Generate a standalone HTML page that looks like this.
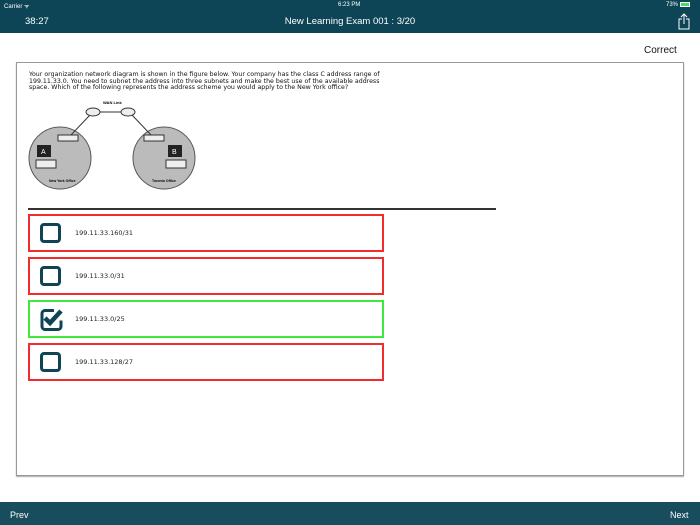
<!DOCTYPE html>
<html><head><style>
*{margin:0;padding:0;box-sizing:border-box}
body{width:700px;height:525px;position:relative;background:#fff;font-family:"Liberation Sans",sans-serif;overflow:hidden}
.top{position:absolute;left:0;top:0;width:700px;height:33px;background:#0d4556;color:#fff}
.bot{position:absolute;left:0;top:502px;width:700px;height:23px;background:#174d5c;color:#fff;font-size:9px}
.abs{position:absolute}
.opt{position:absolute;left:28px;width:356px;height:38px;border:2px solid #f22c2c}
.opt .t{position:absolute;left:45px;top:13px;font-size:6.5px;color:#222;font-family:"DejaVu Sans",sans-serif}
.cb{position:absolute;left:10px;top:7px;width:21px;height:20px;border:3px solid #0e4456;border-radius:4px}
</style></head><body>
<div class="top">
 <div class="abs" style="left:4px;top:2px;font-size:6px">Carrier ᯤ</div>
 <div class="abs" style="left:338px;top:2px;font-size:6px">6:23 PM</div>
 <div class="abs" style="left:666px;top:2px;font-size:6px">73% <span style="display:inline-block;width:10px;height:5px;background:#4cd964;border:1px solid #fff;vertical-align:middle"></span></div>
 <div class="abs" style="left:25px;top:16px;font-size:9.5px">38:27</div>
 <div class="abs" style="left:0;width:700px;text-align:center;top:16px;font-size:9.5px">New Learning Exam 001 : 3/20</div>
 <svg class="abs" style="left:678px;top:13px" width="12" height="17" viewBox="0 0 12 17"><path d="M4 6H1v10h10V6H8M6 11V1M3 4l3-3 3 3" fill="none" stroke="#fff" stroke-width="1"/></svg>
</div>
<div class="abs" style="left:644px;top:45px;font-size:10px;color:#111">Correct</div>
<div class="abs" style="left:16px;top:62px;width:668px;height:414px;border:1px solid #999;box-shadow:0 1px 1px #aaa"></div>
<div class="abs" style="left:29px;top:72px;font-size:6.25px;line-height:6.5px;color:#111;width:356px;font-family:'DejaVu Sans',sans-serif">Your organization network diagram is shown in the figure below. Your company has the class C address range of 199.11.33.0. You need to subnet the address into three subnets and make the best use of the available address space. Which of the following represents the address scheme you would apply to the New York office?</div>
<svg class="abs" style="left:28px;top:98px" width="170" height="100">
 <text x="75" y="6" font-size="4" font-weight="bold" font-family="Liberation Sans">WAN Link</text>
 <circle cx="32" cy="60" r="31" fill="#bbb" stroke="#555"/>
 <circle cx="136" cy="60" r="31" fill="#bbb" stroke="#555"/>
 <line x1="67" y1="14" x2="99" y2="14" stroke="#333"/>
 <line x1="62" y1="17" x2="42" y2="38" stroke="#333"/>
 <line x1="104" y1="17" x2="124" y2="38" stroke="#333"/>
 <ellipse cx="65" cy="14" rx="7" ry="4" fill="#eee" stroke="#333"/>
 <ellipse cx="100" cy="14" rx="7" ry="4" fill="#eee" stroke="#333"/>
 <rect x="30" y="37" width="20" height="6" fill="#eee" stroke="#333"/>
 <rect x="116" y="37" width="20" height="6" fill="#eee" stroke="#333"/>
 <rect x="9" y="47" width="14" height="12" fill="#222"/><text x="13" y="56" font-size="7" fill="#fff" font-family="Liberation Sans">A</text>
 <rect x="140" y="47" width="14" height="12" fill="#222"/><text x="144" y="56" font-size="7" fill="#fff" font-family="Liberation Sans">B</text>
 <rect x="8" y="62" width="20" height="8" fill="#eee" stroke="#333"/>
 <rect x="138" y="62" width="20" height="8" fill="#eee" stroke="#333"/>
 <text x="21" y="84" font-size="3.5" font-weight="bold" font-family="Liberation Sans">New York Office</text>
 <text x="124" y="84" font-size="3.5" font-weight="bold" font-family="Liberation Sans">Toronto Office</text>
</svg>
<div class="abs" style="left:28px;top:208px;width:468px;height:2px;background:#333"></div>
<div class="opt" style="top:214px"><div class="cb"></div><div class="t">199.11.33.160/31</div></div>
<div class="opt" style="top:257px"><div class="cb"></div><div class="t">199.11.33.0/31</div></div>
<div class="opt" style="top:300px;border-color:#3fe83a">
 <svg class="abs" style="left:10px;top:5px" width="24" height="24" viewBox="0 0 24 24"><path d="M14 3.5H5A3 3 0 0 0 2 6.5v13a3 3 0 0 0 3 3h13a3 3 0 0 0 3-3v-6" fill="none" stroke="#0e4456" stroke-width="3"/><path d="M5 11l5 5 11-12" fill="none" stroke="#0e4456" stroke-width="4.5"/></svg><div class="t">199.11.33.0/25</div></div>
<div class="opt" style="top:343px"><div class="cb"></div><div class="t">199.11.33.128/27</div></div>
<div class="bot"><div class="abs" style="left:10px;top:8px">Prev</div><div class="abs" style="left:670px;top:8px">Next</div></div>
</body></html>
